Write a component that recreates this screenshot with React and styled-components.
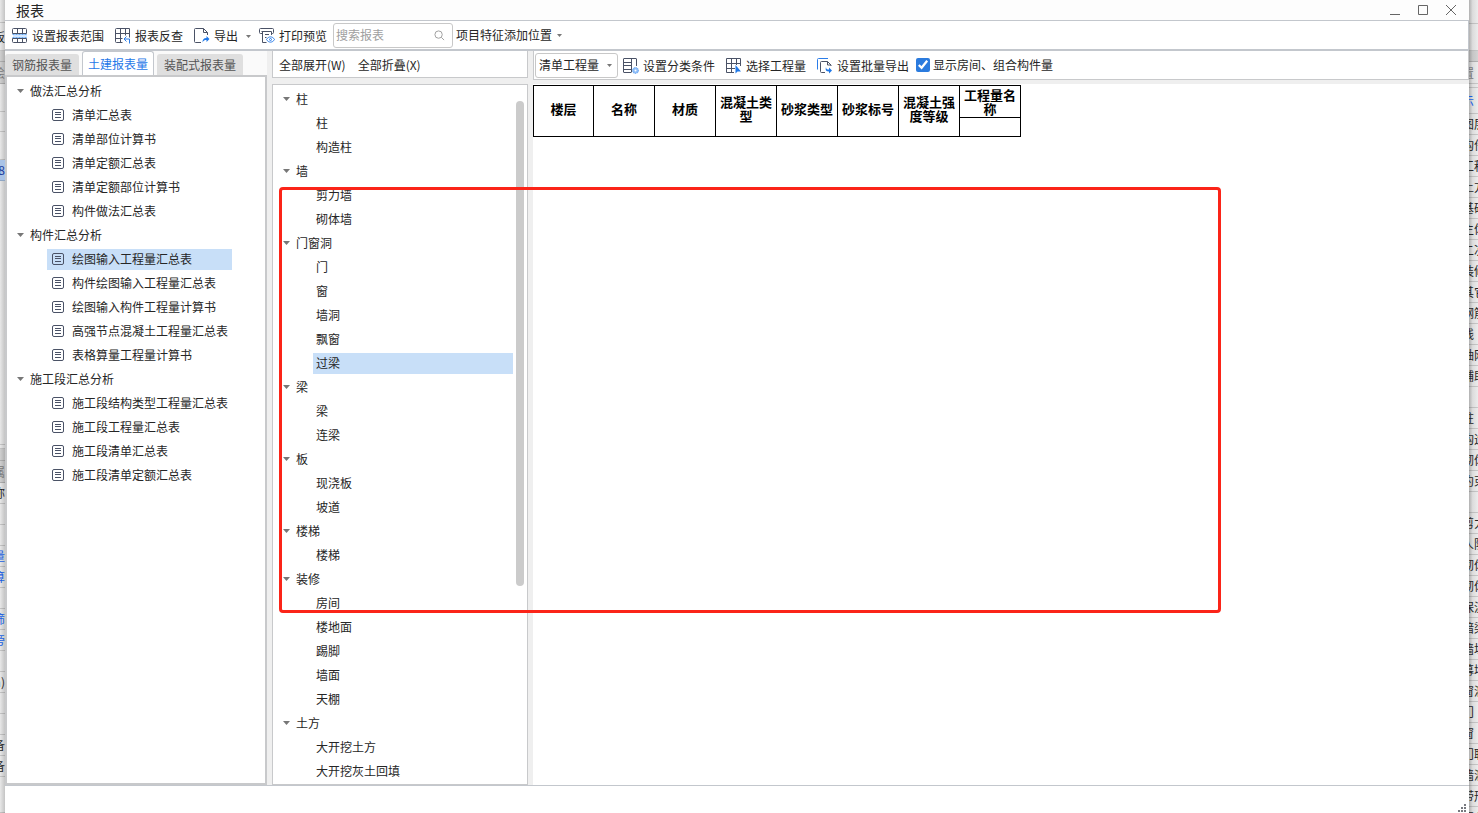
import React, { useState } from "react";
import styled, { createGlobalStyle, css } from "styled-components";

const reportGroups = [
  { title: "做法汇总分析", items: ["清单汇总表", "清单部位计算书", "清单定额汇总表", "清单定额部位计算书", "构件做法汇总表"] },
  { title: "构件汇总分析", items: ["绘图输入工程量汇总表", "构件绘图输入工程量汇总表", "绘图输入构件工程量计算书", "高强节点混凝土工程量汇总表", "表格算量工程量计算书"] },
  { title: "施工段汇总分析", items: ["施工段结构类型工程量汇总表", "施工段工程量汇总表", "施工段清单汇总表", "施工段清单定额汇总表"] },
];

const partGroups = [
  { title: "柱", items: ["柱", "构造柱"] },
  { title: "墙", items: ["剪力墙", "砌体墙"] },
  { title: "门窗洞", items: ["门", "窗", "墙洞", "飘窗", "过梁"] },
  { title: "梁", items: ["梁", "连梁"] },
  { title: "板", items: ["现浇板", "坡道"] },
  { title: "楼梯", items: ["楼梯"] },
  { title: "装修", items: ["房间", "楼地面", "踢脚", "墙面", "天棚"] },
  { title: "土方", items: ["大开挖土方", "大开挖灰土回填"] },
];

const columns = ["楼层", "名称", "材质", "混凝土类型", "砂浆类型", "砂浆标号", "混凝土强度等级"];

// rows of the main window that stay visible on both sides of the dialog
const leftRows = [
  { h: 23 }, { h: 28, text: "板" }, { h: 11, tone: "muted" }, { h: 22, tone: "muted", text: "绘" }, { h: 28 }, { h: 20 }, { h: 28 },
  { h: 21, tone: "picked", text: "8" }, { h: 264 }, { h: 4 }, { h: 12, tone: "muted" }, { h: 22, tone: "muted", text: "属" },
  { h: 21, text: "称" }, { h: 21 }, { h: 21 }, { h: 21, tone: "blue", text: "量" }, { h: 21, tone: "blue", text: "算" },
  { h: 21 }, { h: 21, tone: "blue", text: "筛" }, { h: 21, tone: "blue", text: "旁" }, { h: 21 }, { h: 21, text: "m)" },
  { h: 21 }, { h: 21 }, { h: 21, text: "备" }, { h: 21, text: "备" }, { h: 36 },
];

const rightRows = [
  { h: 24 }, { h: 27 }, { h: 11, tone: "muted" }, { h: 22, tone: "dim", text: "置" }, { h: 4 }, { h: 26, tone: "blue", text: "示" },
  ..."图层,构件,工程,土方,基础,主体,二次,装修,其它,钢筋,线,轴网,辅助,,柱,构造,砌体,约束,,剪力,人防,砌体,砌体,保温,暗梁,墙垛,幕墙,窗洞,门,窗,门联,墙洞,带形,窗台"
    .split(",")
    .map((text) => ({ h: 21, text })),
];

const ScopeIcon = () => (
  <Icon viewBox="0 0 16 16">
    <rect x="1" y="6" width="14" height="4" fill="#d6e9ff" stroke="none" />
    <path d="M.5 5.500V1.500a1 1 0 0 1 1-1h12a1 1 0 0 1 1 1v4zM.5 10.500v3a1 1 0 0 0 1 1h12a1 1 0 0 0 1-1v-3zM5.500.5v5M10.500.5v5M5.500 10.500v4M10.500 10.500v4" />
    <path d="M.5 6.500h14M.5 9.500h14" stroke="#6aaaf5" strokeDasharray="2 1" />
  </Icon>
);

const BackCheckIcon = () => (
  <Icon viewBox="0 0 16 16">
    <path d="M7.500 14.500h-6a1 1 0 0 1-1-1v-12a1 1 0 0 1 1-1h13v9M.5 5.500h14M.5 10.500h7M5.500.5v14M10.500.5v7" />
    <path d="M11.500 8.500l-2.500 2.500 2.500 2.500M9.500 11h5v4.500" stroke="#2b7de9" />
  </Icon>
);

const ExportIcon = () => (
  <Icon viewBox="0 0 16 16">
    <path d="M7 14.500H1.500a1 1 0 0 1-1-1v-12a1 1 0 0 1 1-1h8l4 4V7M9.500.5V4.500h4" />
    <path d="M8.500 14.500c0-3 1-4.500 4-4.500V8l3 3-3 3v-2c-2 0-3 .5-4 2.500z" fill="#1f78e8" stroke="none" />
  </Icon>
);

const PrintIcon = () => (
  <Icon viewBox="0 0 16 16">
    <path d="M3 5.500H1.500a1 1 0 0 1-1-1v-3a1 1 0 0 1 1-1h12a1 1 0 0 1 1 1v3a1 1 0 0 1-1 1H13M2.500 3.500h10V7M3.500 3.500v11h4M6 6.500h4M6 9.500h1.500" />
    <path d="M7.500 11.500c2-3.500 6-3.500 8 0-2 3.500-6 3.500-8 0z" stroke="#2b7de9" />
    <circle cx="11.500" cy="11.500" r="1" stroke="#2b7de9" />
  </Icon>
);

const ClassifyIcon = () => (
  <Icon viewBox="0 0 16 16">
    <path d="M8 14.500H1a.5.5 0 0 1-.5-.5V1a.5.5 0 0 1 .5-.5h12a.5.5 0 0 1 .5.5v7M8.500.5v14M.5 4.500h8M.5 7.500h8M.5 11.500h8" />
    <circle cx="12.500" cy="12.500" r="3" fill="#8dbdf8" stroke="#5b9df0" strokeDasharray="1 1" />
    <circle cx="12.500" cy="12.500" r="1" fill="#fff" stroke="none" />
  </Icon>
);

const PickIcon = () => (
  <Icon viewBox="0 0 16 16">
    <path d="M8 14.500H.5V.5h14V8M.5 5.500h14M.5 10.500H9M5.500.5v14M10.500.5V7" />
    <path d="M9.500 7v8.500l2-2h3.500z" fill="#1f78e8" stroke="none" />
  </Icon>
);

const BatchIcon = () => (
  <Icon viewBox="0 0 16 16">
    <path d="M.5 11.500v-10a1 1 0 0 1 1-1H11" stroke="#2b7de9" />
    <path d="M8 14.500H4.500a1 1 0 0 1-1-1v-9a1 1 0 0 1 1-1h6l3.500 3.500v1M10.500 3.500V7H14" />
    <path d="M9 9c0 2 1 2.500 3 2.500v-2l3 3-3 3v-2c-3 0-4-1.500-3-4.500z" fill="#1f78e8" stroke="none" />
  </Icon>
);

const SheetIcon = () => (
  <Icon viewBox="0 0 13 13" small>
    <rect x="0.5" y="0.500" width="11" height="11" rx="1.500" />
    <path d="M3 3.500h6M3 5.500h6M3 8.500h6" />
  </Icon>
);

const Caret = ({ muted }) => (
  <CaretSvg viewBox="0 0 7 4" muted={muted ? 1 : 0} aria-hidden="true">
    <path d="M0 0h7L3.500 4z" />
  </CaretSvg>
);

const Tree = ({ groups, selected, onSelect, withIcon }) => {
  const [closed, setClosed] = useState({});

  return (
    <TreeList $wide={!withIcon}>
      {groups.map((group) => (
        <li key={group.title}>
          <GroupButton onClick={() => setClosed({ ...closed, [group.title]: !closed[group.title] })}>
            <Caret />
            {group.title}
          </GroupButton>
          {!closed[group.title] && (
            <ItemList>
              {group.items.map((item) => (
                <li key={item}>
                  <ItemButton $active={item === selected} $icon={withIcon} onClick={() => onSelect(item)}>
                    {withIcon && <SheetIcon />}
                    {item}
                  </ItemButton>
                </li>
              ))}
            </ItemList>
          )}
        </li>
      ))}
    </TreeList>
  );
};

const App = () => {
  const [report, setReport] = useState("绘图输入工程量汇总表");
  const [part, setPart] = useState("过梁");
  const [tab, setTab] = useState("土建报表量");
  const [showRooms, setShowRooms] = useState(true);

  return (
    <Shell>
      <GlobalStyle />
      <Strip $side="left">
        {leftRows.map((row, i) => (
          <StripRow key={i} $h={row.h} $tone={row.tone}><span>{row.text}</span></StripRow>
        ))}
      </Strip>

      <Window>
        <TitleBar>
          <h1>报表</h1>
          <WindowButtons>
            <button aria-label="最小化"><svg viewBox="0 0 12 12"><path d="M1 10.500h10" /></svg></button>
            <button aria-label="最大化"><svg viewBox="0 0 12 12"><path d="M1.500 1.500h9v9h-9z" /></svg></button>
            <button aria-label="关闭"><svg viewBox="0 0 12 12"><path d="M1 1l10 10M11 1L1 11" /></svg></button>
          </WindowButtons>
        </TitleBar>

        <MainBar>
          <ToolButton><ScopeIcon />设置报表范围</ToolButton>
          <ToolButton><BackCheckIcon />报表反查</ToolButton>
          <ToolButton><ExportIcon />导出<CaretGap><Caret muted /></CaretGap></ToolButton>
          <ToolButton $tight><PrintIcon />打印预览</ToolButton>
          <SearchBox>
            <input type="text" placeholder="搜索报表" aria-label="搜索报表" />
            <svg viewBox="0 0 12 12"><circle cx="5" cy="5" r="4" /><path d="M8 8l3 3" /></svg>
          </SearchBox>
          <PlainButton>项目特征添加位置<Caret muted /></PlainButton>
        </MainBar>

        <Body>
          <ReportPane>
            <Tabs>
              {["钢筋报表量", "土建报表量", "装配式报表量"].map((name) => (
                <Tab key={name} $active={tab === name} onClick={() => setTab(name)}>{name}</Tab>
              ))}
            </Tabs>
            <ReportTree>
              <Tree groups={reportGroups} selected={report} onSelect={setReport} withIcon />
            </ReportTree>
          </ReportPane>

          <PartPane>
            <PartBar>
              <button>全部展开(W)</button>
              <button>全部折叠(X)</button>
            </PartBar>
            <PartTree>
              <Tree groups={partGroups} selected={part} onSelect={setPart} />
              <Thumb />
            </PartTree>
          </PartPane>

          <SheetPane>
            <SheetBar>
              <SelectBox>
                <select aria-label="工程量类型" defaultValue="清单工程量">
                  <option>清单工程量</option>
                  <option>定额工程量</option>
                </select>
                <Caret muted />
              </SelectBox>
              <ToolButton><ClassifyIcon />设置分类条件</ToolButton>
              <ToolButton><PickIcon />选择工程量</ToolButton>
              <ToolButton><BatchIcon />设置批量导出</ToolButton>
              <CheckLabel>
                <input type="checkbox" checked={showRooms} onChange={(e) => setShowRooms(e.target.checked)} />
                显示房间、组合构件量
              </CheckLabel>
            </SheetBar>
            <Sheet>
              <Table>
                <thead>
                  <tr>
                    {columns.map((name) => <th key={name} rowSpan="2">{name}</th>)}
                    <th>工程量名称</th>
                  </tr>
                  <tr><th aria-label="工程量" /></tr>
                </thead>
              </Table>
            </Sheet>
          </SheetPane>

          <Marker />
        </Body>

        <StatusBar>
          <svg viewBox="0 0 9 9">
            <path d="M6 0h2v2H6zM3 3h2v2H3zM6 3h2v2H6zM0 6h2v2H0zM3 6h2v2H3zM6 6h2v2H6z" />
          </svg>
        </StatusBar>
      </Window>

      <Strip $side="right">
        {rightRows.map((row, i) => (
          <StripRow key={i} $h={row.h} $tone={row.tone}><span>{row.text}</span></StripRow>
        ))}
      </Strip>
    </Shell>
  );
};
export default App;

const GlobalStyle = createGlobalStyle`
  * {
    box-sizing: border-box;
  }
  body {
    margin: 0;
    background: #fff;
    color: #262626;
    font-family: "Noto Sans CJK SC", "Noto Sans", sans-serif;
    font-size: 12px;
    line-height: 16px;
  }
  button, input, select {
    margin: 0;
    padding: 0;
    border: 0;
    background: none;
    color: inherit;
    font: inherit;
  }
  ul {
    margin: 0;
    padding: 0;
    list-style: none;
  }
`;

const Shell = styled.div`
  display: grid;
  grid-template-columns: 5px minmax(0, 1fr) 9px;
  min-height: 100vh;
`;

const Strip = styled.div`
  height: 100vh;
  overflow: hidden;
  background: ${(props) => props.$side === "left"
    ? "linear-gradient(to right, #e8e8e8, #c4c4c4)"
    : "linear-gradient(to right, #b0b0b0, #dcdcdc 40%, #ececec)"};
  & > div {
    justify-content: ${(props) => (props.$side === "left" ? "flex-end" : "flex-start")};
  }
  & span {
    flex: none;
    margin-left: ${(props) => (props.$side === "left" ? "0" : "-7px")};
  }
`;

const tones = {
  blue: css`color: #1a5fe0;`,
  dim: css`color: #777;`,
  muted: css`color: #777; background: rgba(0, 0, 0, 0.1);`,
  picked: css`color: #1a3c9c; background: #a9c3e6;`,
};

const StripRow = styled.div`
  display: flex;
  align-items: center;
  height: ${(props) => props.$h}px;
  border-bottom: 1px solid rgba(0, 0, 0, 0.15);
  white-space: nowrap;
  overflow: hidden;
  ${(props) => tones[props.$tone]}
`;

const Window = styled.main`
  display: flex;
  flex-direction: column;
  background: #fff;
`;

const TitleBar = styled.header`
  display: flex;
  justify-content: space-between;
  align-items: center;
  height: 20px;
  padding: 0 12px 0 11px;
  background: #fdfdfd;
  h1 {
    margin: 0;
    font-size: 14px;
    font-weight: 400;
    line-height: 20px;
  }
`;

const WindowButtons = styled.div`
  display: flex;
  gap: 16px;
  button {
    display: flex;
  }
  svg {
    width: 12px;
    height: 12px;
    fill: none;
    stroke: #666;
  }
`;

const MainBar = styled.div`
  display: flex;
  align-items: center;
  height: 31px;
  padding-left: 7px;
  border: 1px solid #c3c7cd;
  border-width: 1px 1px 2px 0;
`;

const Icon = styled.svg.attrs({ "aria-hidden": true })`
  flex: none;
  width: ${(props) => (props.small ? "13px" : "16px")};
  height: ${(props) => (props.small ? "13px" : "16px")};
  fill: none;
  stroke: #4a5266;
`;

const CaretSvg = styled.svg`
  flex: none;
  width: ${(props) => (props.muted ? "5px" : "7px")};
  height: ${(props) => (props.muted ? "3px" : "4px")};
  fill: #777;
`;

const ToolButton = styled.button`
  display: flex;
  align-items: center;
  gap: 4px;
  margin-right: ${(props) => (props.$tight ? "6px" : "11px")};
  padding-top: 1px;
  white-space: nowrap;
`;

const CaretGap = styled.span`
  display: flex;
  padding: 2px 0 0 4px;
  margin-right: -3px;
`;

const SearchBox = styled.div`
  display: flex;
  align-items: center;
  width: 120px;
  height: 25px;
  margin-right: 3px;
  padding: 0 7px 0 2px;
  border: 1px solid #c8c8c8;
  border-radius: 3px;
  input {
    flex: 1;
    min-width: 0;
    outline: none;
  }
  input::placeholder {
    color: #a0a0a0;
  }
  svg {
    width: 11px;
    height: 11px;
    fill: none;
    stroke: #999;
  }
`;

const PlainButton = styled.button`
  display: flex;
  align-items: center;
  gap: 5px;
  white-space: nowrap;
`;

const Body = styled.div`
  position: relative;
  flex: 1;
  display: grid;
  grid-template-columns: 262px 256px minmax(0, 1fr);
  column-gap: 5px;
  background: #efefef;
`;

const ReportPane = styled.section`
  display: flex;
  flex-direction: column;
`;

const Tabs = styled.div`
  display: flex;
  align-items: flex-end;
  gap: 3px;
  height: 24px;
  background: #fafafa;
`;

const Tab = styled.button`
  height: 21px;
  padding: 0 7px;
  border-radius: 3px 3px 0 0;
  background: #dfdfdf;
  color: #555;
  white-space: nowrap;
  ${(props) => props.$active &&
    css`
      height: 24px;
      padding: 0 5px;
      border: 1px solid #c3c7cd;
      border-bottom: 0;
      background: #fff;
      color: #1f78e8;
  `}
`;

const ReportTree = styled.div`
  flex: 1;
  padding: 2px 0 0 10px;
  border: 2px solid #c8c9cb;
  background: #fff;
`;

const TreeList = styled.ul`
  width: ${(props) => (props.$wide ? "100%" : "max-content")};
`;

const GroupButton = styled.button`
  display: flex;
  align-items: center;
  gap: 6px;
  height: 24px;
  white-space: nowrap;
`;

const ItemList = styled.ul`
  margin-left: 30px;
  li {
    display: flex;
    align-items: center;
    height: 24px;
  }
`;

const ItemButton = styled.button`
  display: flex;
  align-items: center;
  gap: 7px;
  width: 100%;
  height: 21px;
  padding: 0 4px 0 ${(props) => (props.$icon ? "5px" : "3px")};
  background: ${(props) => (props.$active ? "#c8dff8" : "none")};
  white-space: nowrap;
`;

const PartPane = styled.section`
  display: flex;
  flex-direction: column;
  gap: 6px;
`;

const PartBar = styled.div`
  display: flex;
  align-items: center;
  gap: 12px;
  height: 27px;
  padding: 2px 0 0 6px;
  border: 1px solid #c8c9cb;
  border-top: 0;
  background: #fff;
`;

const PartTree = styled.div`
  flex: 1;
  display: flex;
  gap: 3px;
  padding: 2px 3px 0 10px;
  border: 1px solid #c8c9cb;
  background: #fff;
`;

const Thumb = styled.div`
  flex: none;
  width: 8px;
  height: 485px;
  margin-top: 14px;
  border-radius: 4px;
  background: #cbcbcb;
`;

const SheetPane = styled.section`
  display: flex;
  flex-direction: column;
  gap: 4px;
`;

const SheetBar = styled.div`
  display: flex;
  align-items: center;
  height: 29px;
  padding-left: 1px;
  border: 1px solid #c8c9cb;
  border-top: 0;
  background: #fff;
`;

const SelectBox = styled.div`
  display: flex;
  align-items: center;
  width: 83px;
  height: 25px;
  margin-right: 5px;
  padding: 0 5px 0 3px;
  border: 1px solid #c8c8c8;
  border-radius: 3px;
  select {
    flex: 1;
    appearance: none;
    outline: none;
  }
`;

const CheckLabel = styled.label`
  display: flex;
  align-items: center;
  gap: 3px;
  margin-left: -4px;
  white-space: nowrap;
  input {
    width: 14px;
    height: 14px;
    accent-color: #2b7bde;
  }
`;

const Sheet = styled.div`
  flex: 1;
  padding-top: 1px;
  background: #fff;
`;

const Table = styled.table`
  width: 488px;
  table-layout: fixed;
  border-collapse: collapse;
  th {
    height: 19px;
    padding: 0 2px;
    border: 1px solid #000;
    color: #000;
    font-size: 13px;
    font-weight: 700;
    line-height: 14px;
    word-break: break-all;
  }
  th[rowspan] {
    padding-bottom: 4px;
  }
  th[rowspan]:first-child {
    width: 60px;
  }
  tr:first-child th {
    height: 32px;
  }
`;

const Marker = styled.div`
  position: absolute;
  top: 136px;
  left: 274px;
  width: 942px;
  height: 426px;
  border: 3px solid #fb2418;
  border-radius: 4px;
  pointer-events: none;
`;

const StatusBar = styled.footer`
  display: flex;
  justify-content: flex-end;
  align-items: flex-end;
  height: 28px;
  padding: 0 2px 0 0;
  border-top: 1px solid #c3c7cd;
  svg {
    width: 9px;
    height: 9px;
    fill: #77797f;
  }
`;
